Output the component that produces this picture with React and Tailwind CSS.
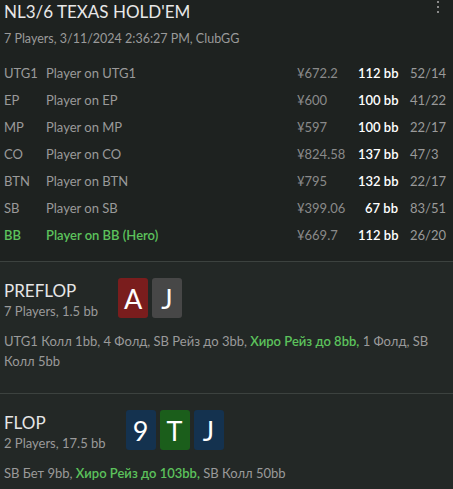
import React from "react";

const rows = [
  ["UTG1", "Player on UTG1", "¥672.2", "112 bb", "52/14"],
  ["EP", "Player on EP", "¥600", "100 bb", "41/22"],
  ["MP", "Player on MP", "¥597", "100 bb", "22/17"],
  ["CO", "Player on CO", "¥824.58", "137 bb", "47/3"],
  ["BTN", "Player on BTN", "¥795", "132 bb", "22/17"],
  ["SB", "Player on SB", "¥399.06", "67 bb", "83/51"],
  ["BB", "Player on BB (Hero)", "¥669.7", "112 bb", "26/20", true],
];

function Card({ v, bg }) {
  return (
    <div className={`w-[30px] h-[40px] rounded-[3px] flex items-center justify-center text-[27px] leading-none text-white ${bg}`}>
      {v}
    </div>
  );
}

function Street({ title, sub, cards, children }) {
  return (
    <div className="bg-[#232826] border-t border-[#3c423f] px-1 pt-4 pb-[22px]">
      <div className="flex items-start gap-5">
        <div className="pt-[2px]">
          <div className="text-[17px] leading-[22px] text-[#e6e6e6]">{title}</div>
          <div className="text-[13px] leading-[18px] text-[#9a9a9a]">{sub}</div>
        </div>
        <div className="flex gap-1">{cards}</div>
      </div>
      <div className="mt-[11px] text-[13px] leading-[20px] text-[#9a9a9a]">{children}</div>
    </div>
  );
}

export default function App() {
  return (
    <div className="w-[453px] h-[489px] overflow-hidden bg-[#232826]" style={{ fontFamily: 'Lato, "Noto Sans", sans-serif' }}>
      <div className="relative bg-[#1e2220] px-1 pb-3">
        <div className="absolute right-[14px] top-[1px] flex flex-col gap-[3px]">
          <div className="w-[2px] h-[2px] bg-[#8a8a8a]" />
          <div className="w-[2px] h-[2px] bg-[#8a8a8a]" />
          <div className="w-[2px] h-[2px] bg-[#8a8a8a]" />
        </div>
        <div className="text-[17px] leading-[24px] text-[#e8e8e8]">NL3/6 TEXAS HOLD'EM</div>
        <div className="mt-[6px] text-[12.5px] leading-[18px] text-[#9a9a9a]">7 Players, 3/11/2024 2:36:27 PM, ClubGG</div>
        <div className="mt-3">
          {rows.map(([pos, name, stack, bb, stat, hero]) => (
            <div key={pos} className="flex items-center h-[27px] text-[13px] whitespace-nowrap">
              <div className={`w-[42px] ${hero ? "text-[#5cc25c] font-semibold" : "text-[#9a9a9a]"}`}>{pos}</div>
              <div className={`flex-1 ${hero ? "text-[#5cc25c] font-semibold" : "text-[#9a9a9a]"}`}>{name}</div>
              <div className="w-[61px] text-[#8a8a8a]">{stack}</div>
              <div className="w-[40px] text-right text-white font-semibold">{bb}</div>
              <div className="ml-3 w-[39px] text-[#9a9a9a]">{stat}</div>
            </div>
          ))}
        </div>
      </div>
      <Street
        title="PREFLOP"
        sub="7 Players, 1.5 bb"
        cards={[
          <Card key="a" v="A" bg="bg-[#7a1d1d]" />,
          <Card key="j" v="J" bg="bg-[#474747]" />,
        ]}
      >
        UTG1 Колл 1bb, 4 Фолд, SB Рейз до 3bb, <span className="text-[#5cc25c] font-semibold">Хиро Рейз до 8bb,</span> 1 Фолд, SB Колл 5bb
      </Street>
      <Street
        title="FLOP"
        sub="2 Players, 17.5 bb"
        cards={[
          <Card key="9" v="9" bg="bg-[#14324f]" />,
          <Card key="t" v="T" bg="bg-[#1b5e1b]" />,
          <Card key="j" v="J" bg="bg-[#14324f]" />,
        ]}
      >
        SB Бет 9bb, <span className="text-[#5cc25c] font-semibold">Хиро Рейз до 103bb,</span> SB Колл 50bb
      </Street>
    </div>
  );
}
